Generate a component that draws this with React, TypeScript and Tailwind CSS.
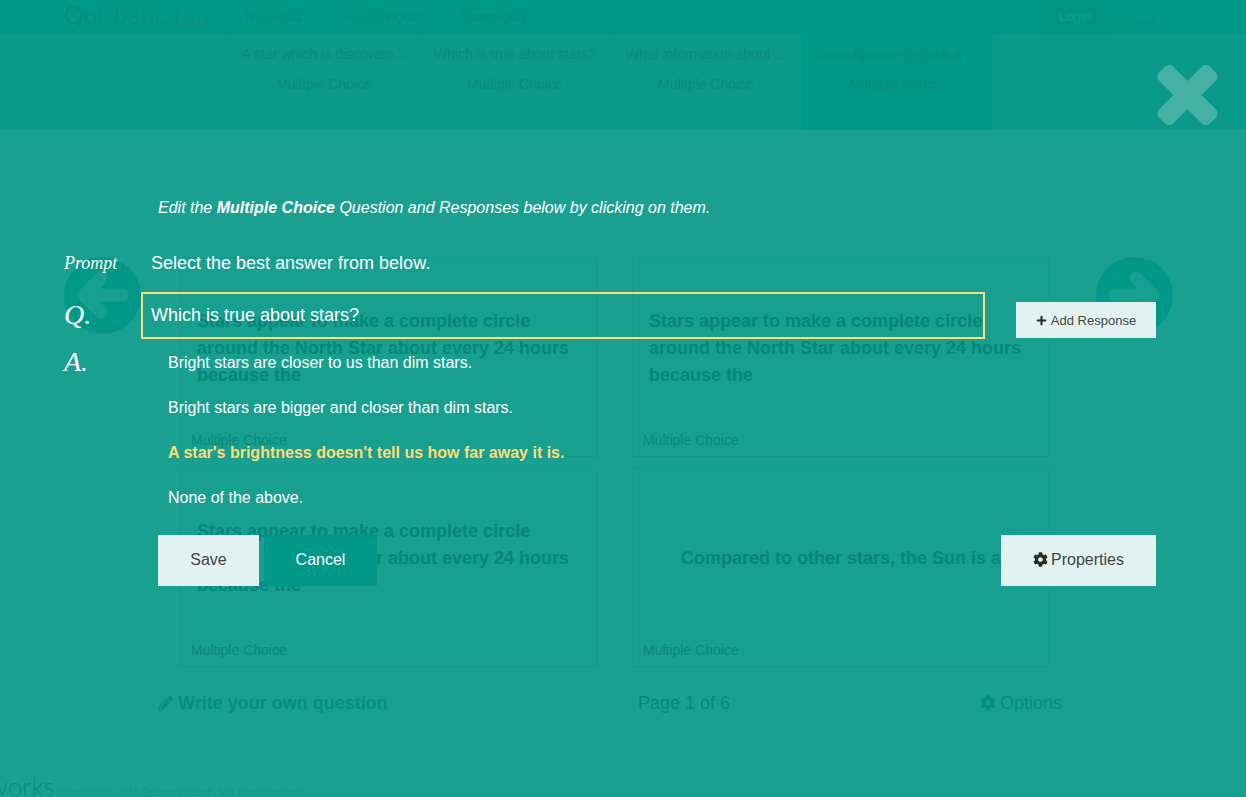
import { FaCog, FaPencilAlt, FaPlus } from "react-icons/fa";

const navLinks = [
  { label: "New Quiz", width: "w-[98px]" },
  { label: "Preview Quiz", width: "w-[118px]" },
  { label: "Share Quiz", width: "w-[106px]" },
];

const tabs = [
  { title: "A star which is discovere...", active: false },
  { title: "Which is true about stars?", active: false },
  { title: "What information about ...", active: false },
  { title: "Stars appear to make a ...", active: true },
];

const starsText =
  "Stars appear to make a complete circle around the North Star about every 24 hours because the";

const cards = [
  { text: starsText, centered: false },
  { text: starsText, centered: false },
  { text: starsText, centered: false },
  { text: "Compared to other stars, the Sun is a", centered: true },
];

const responses = [
  { text: "Bright stars are closer to us than dim stars.", correct: false },
  { text: "Bright stars are bigger and closer than dim stars.", correct: false },
  { text: "A star's brightness doesn't tell us how far away it is.", correct: true },
  { text: "None of the above.", correct: false },
];

const ArrowCircle = ({ flip }: { flip?: boolean }) => (
  <svg viewBox="0 0 77 77" className={`h-[77px] w-[77px] shrink-0 ${flip ? "-scale-x-100" : ""}`}>
    <circle cx="38.5" cy="38.5" r="38.5" fill="#009888" />
    <path
      d="M58 38H20M37 21L20 38L37 55"
      fill="none"
      stroke="#17a08f"
      strokeWidth="13"
      strokeLinecap="round"
      strokeLinejoin="round"
    />
  </svg>
);

const Background = () => (
  <div className="flex h-full flex-col">
    <nav className="flex h-[34px] shrink-0 bg-[#009888] text-[13px] text-[#088b7c]">
      <div className="flex w-[225px] items-end pb-[6px] pl-[64px]">
        <span className="w-[115px] font-['Lato',sans-serif] text-[25px] leading-[28px] font-light whitespace-nowrap">
          <span className="text-[#068a7a]">Quiz</span>
          <span className="text-[#098e7e]">bench</span>
        </span>
        <span className="text-[10px] leading-[12px] font-bold text-[#1a9478]">FREE</span>
      </div>
      {navLinks.map((link) => (
        <div
          key={link.label}
          className={`flex ${link.width} items-center justify-center border-l border-[#0c9787]`}
        >
          {link.label}
        </div>
      ))}
      <div className="flex-1" />
      <div className="flex w-[72px] items-center justify-center bg-[#009686] text-[#12a08f]">Login</div>
      <div className="w-[135px] pt-[15px] pl-[11px] text-[10px] leading-[14px] text-[#08907f]">v4554a</div>
    </nav>

    <div className="flex h-[96px] shrink-0 bg-[#0a9a8a] pl-[228px] text-[14px] text-[#0a8c7e]">
      {tabs.map((tab) => (
        <div
          key={tab.title}
          className={`w-[191px] border-l border-[#0a9687] pt-[12px] text-center ${
            tab.active ? "bg-[#009888]" : ""
          }`}
        >
          <div className="leading-[16px]">{tab.title}</div>
          <div className="mt-[14px] leading-[16px]">Multiple Choice</div>
        </div>
      ))}
      <div className="border-l border-[#0a9687]" />
    </div>

    <main className="flex flex-1 flex-col bg-[#1aa091]">
      <div className="mt-[127px] flex pl-[64px]">
        <ArrowCircle />
        <div className="ml-[39px] grid w-[870px] grid-cols-[418px_418px] gap-x-[34px] gap-y-[10px]">
          {cards.map((card, i) => (
            <div key={i} className="flex h-[200px] flex-col border border-[#16998b] bg-[#179f90]">
              <div
                className={`flex h-[181px] items-center px-[16px] text-[18px] leading-[27px] font-bold text-[#06877a] ${
                  card.centered ? "justify-center text-center" : ""
                }`}
              >
                <p>{card.text}</p>
              </div>
              <div className="-mt-[7px] pl-[10px] text-[14px] leading-[16px] text-[#0b8a7c]">Multiple Choice</div>
            </div>
          ))}
        </div>
        <div className="ml-[46px]">
          <ArrowCircle flip />
        </div>
      </div>
      <div className="mt-[24px] flex items-center pl-[158px] text-[18px] leading-[24px] text-[#03907f]">
        <div className="flex w-[480px] items-center gap-[5px] font-bold">
          <FaPencilAlt className="h-[15px] w-[15px]" />
          Write your own question
        </div>
        <div className="w-[342px] text-[#068a7c]">Page 1 of 6</div>
        <div className="flex items-center gap-[4px]">
          <FaCog className="h-[16px] w-[16px]" />
          Options
        </div>
      </div>
      <div className="mt-auto flex h-[29px] items-end overflow-hidden">
        <span className="-mb-[4px] -ml-[12px] font-['Lato',sans-serif] text-[26px] leading-[30px] font-light text-[#0d8a7d]">
          works
        </span>
        <span className="ml-[4px] translate-y-[3px] text-[10px] leading-[14px] tracking-[0.18px] text-[#12978a]">
          Copyright © 2015 Eduworks Corp. For demo use only.
        </span>
      </div>
    </main>
  </div>
);

const Editor = () => (
  <div className="absolute inset-0 pt-[196px] text-white">
    <p className="pl-[158px] text-[16px] leading-[24px] italic">
      Edit the <b>Multiple Choice</b> Question and Responses below by clicking on them.
    </p>

    <div className="mt-[30px] flex h-[26px] items-center pl-[64px]">
      <span className="w-[87px] font-['Liberation_Serif',serif] text-[18px] italic">Prompt</span>
      <span className="text-[18px]">Select the best answer from below.</span>
    </div>

    <div className="mt-[16px] flex pl-[64px]">
      <span className="w-[77px] -translate-y-[1px] self-center font-['Liberation_Serif',serif] text-[28px] leading-[30px] italic">
        Q.
      </span>
      <div className="flex h-[47px] w-[844px] items-center border-2 border-[#ffdb75] pl-[8px] text-[18px]">
        Which is true about stars?
      </div>
      <button className="mt-[10px] ml-[31px] flex h-[36px] w-[140px] items-center justify-center gap-[4px] bg-[#e2f2f1] pt-[1px] text-[13px] text-[#444]">
        <FaPlus className="h-[11px] w-[11px] text-[#2b2b2b]" />
        Add Response
      </button>
    </div>

    <div className="relative pt-[1px] pl-[168px]">
      <span className="absolute top-[8px] left-[64px] font-['Liberation_Serif',serif] text-[28px] leading-[30px] italic">
        A.
      </span>
      {responses.map((r) => (
        <div
          key={r.text}
          className={`flex h-[45px] items-center text-[16px] ${r.correct ? "font-bold text-[#ffdb75]" : ""}`}
        >
          {r.text}
        </div>
      ))}
    </div>

    <div className="mt-[15px] flex w-[1156px] pl-[158px] text-[16px]">
      <button className="h-[51px] w-[101px] bg-[#e2f2f1] pb-[2px] text-[#444]">Save</button>
      <button className="ml-[5px] h-[51px] w-[113px] bg-[#009888] pb-[2px] text-white">Cancel</button>
      <button className="ml-auto flex h-[51px] w-[155px] items-center justify-center gap-[3px] bg-[#e2f2f1] pb-[2px] text-[#444]">
        <FaCog className="h-[15px] w-[15px] text-[#2b2b2b]" />
        Properties
      </button>
    </div>
  </div>
);

export default function App() {
  return (
    <div className="relative h-[797px] w-[1246px] overflow-hidden font-['Liberation_Sans',Arial,sans-serif]">
      <Background />
      <Editor />
      <svg viewBox="0 0 61 60" className="absolute top-[65px] left-[1157px] h-[60px] w-[61px]">
        <rect x="-5.5" y="20" width="72" height="20" rx="6" fill="#45b1a5" transform="rotate(45 30.5 30)" />
        <rect x="-5.5" y="20" width="72" height="20" rx="6" fill="#45b1a5" transform="rotate(-45 30.5 30)" />
      </svg>
    </div>
  );
}
